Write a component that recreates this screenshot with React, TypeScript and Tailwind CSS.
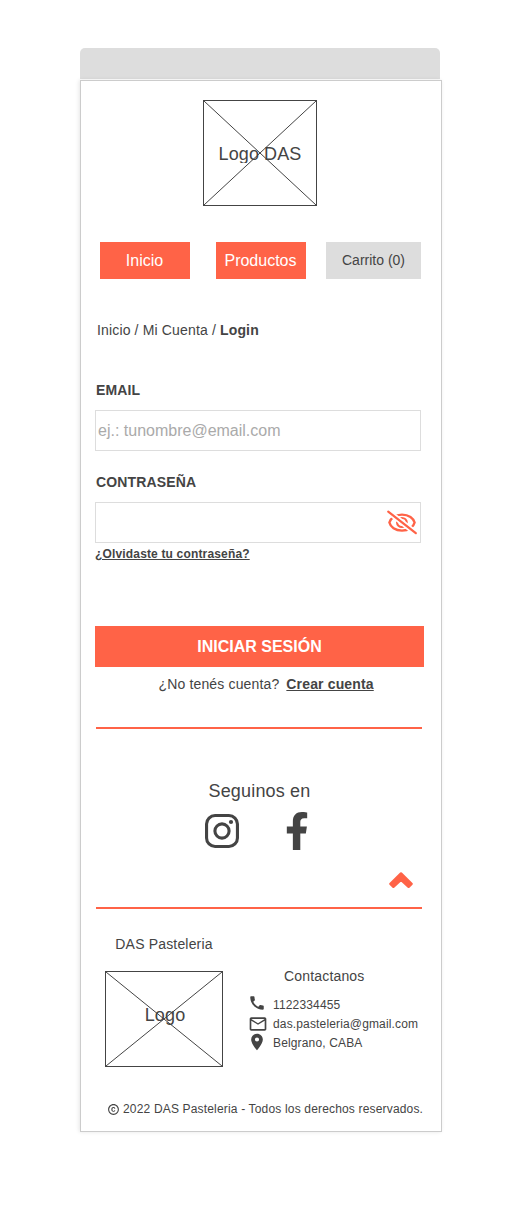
import type { ReactNode } from "react";
import { FaFacebookF } from "react-icons/fa";
import { MdCall, MdCopyright, MdLocationOn, MdMailOutline } from "react-icons/md";

function Placeholder({ className, label }: { className: string; label: ReactNode }) {
  return (
    <div className={`relative flex items-center justify-center border border-[#444] ${className}`}>
      {label}
      <svg className="absolute inset-0 h-full w-full" viewBox="0 0 100 100" preserveAspectRatio="none">
        <path d="M0 0L100 100M100 0L0 100" stroke="#444" strokeWidth="1" vectorEffect="non-scaling-stroke" fill="none" />
      </svg>
    </div>
  );
}

function EyeOff() {
  return (
    <svg width="32" height="26" viewBox="0 0 32 26" fill="none" stroke="#ff6347" strokeWidth="2.4">
      <path d="M3.4 12.6C4.4 8.2 9.2 4.6 16 4.6S27.6 8.2 28.6 12.6C27.6 17 22.8 20.6 16 20.6S4.4 17 3.4 12.6Z" />
      <ellipse cx="15.9" cy="12.5" rx="4.8" ry="4.5" strokeWidth="2.2" />
      <path d="M4 3L28 21.8" stroke="#fff" strokeWidth="5.8" />
      <path d="M2.2 1.6L29.8 23.2" strokeWidth="2.2" strokeLinecap="round" />
    </svg>
  );
}

function Instagram() {
  return (
    <svg width="34" height="34" viewBox="0 0 34 34" fill="none" stroke="#444" strokeWidth="3.1">
      <rect x="1.55" y="1.55" width="30.9" height="30.9" rx="8.5" />
      <circle cx="17" cy="17" r="7.1" />
      <circle cx="26" cy="8" r="2.1" fill="#444" stroke="none" />
    </svg>
  );
}

export default function App() {
  return (
    <div className="h-[1210px] w-[520px] bg-white pt-12 pl-20 font-['Liberation_Sans',Arial,sans-serif] text-sm text-[#444]">
      <div className="h-[31px] w-[360px] rounded-t-[5px] bg-[#ddd]" />
      <main className="mt-px flex h-[1052px] w-[362px] flex-col border border-[#ccc] bg-white shadow-[-1px_0_4px_rgba(0,0,0,0.1)]">
        <Placeholder
          className="mt-[19px] ml-[122px] h-[106px] w-[114px] shrink-0"
          label={<span className="mt-0.5 h-[18px] overflow-hidden text-lg leading-[18px] tracking-[0.1px]">Logo DAS</span>}
        />
        <nav className="mt-9 ml-[19px] flex h-[37px] shrink-0">
          <button className="w-[90px] bg-[#ff6347] pr-px text-base text-white">Inicio</button>
          <button className="ml-[26px] w-[90px] bg-[#ff6347] pr-px text-base text-white">Productos</button>
          <button className="ml-5 w-[95px] bg-[#ddd] pb-0.5">Carrito (0)</button>
        </nav>
        <p className="mt-[41px] ml-4 tracking-[0.15px]">
          Inicio / Mi Cuenta / <b>Login</b>
        </p>

        <form className="mt-10 ml-3.5 flex flex-col">
          <label className="ml-px font-bold tracking-[0.15px]">EMAIL</label>
          <input
            className="mt-2.5 h-[41px] w-[326px] border border-[#ddd] px-0.5 text-base placeholder:text-[#aaa]"
            placeholder="ej.: tunombre@email.com"
          />
          <label className="mt-[21px] ml-px font-bold tracking-[0.15px]">CONTRASEÑA</label>
          <div className="mt-2.5 flex h-[41px] w-[326px] items-center justify-end border border-[#ddd] pr-[2px]">
            <input type="password" className="h-full min-w-0 flex-1" />
            <EyeOff />
          </div>
          <a className="mt-[3px] text-xs font-bold tracking-[0.16px] underline">¿Olvidaste tu contraseña?</a>
          <button type="button" className="mt-16 h-[41px] w-[329px] bg-[#ff6347] text-base font-bold text-white">
            INICIAR SESIÓN
          </button>
        </form>
        <p className="mt-[7px] ml-[77.5px] flex gap-[7px] tracking-[0.15px]">
          <span>¿No tenés cuenta?</span>
          <b className="underline">Crear cuenta</b>
        </p>
        <hr className="mt-[33px] ml-[15px] h-0.5 w-[326px] shrink-0 border-0 bg-[#ff6347]" />

        <h2 className="mt-[52px] w-[357px] text-center text-lg leading-5 tracking-[0.17px]">Seguinos en</h2>
        <div className="mt-[11px] ml-[124px] flex h-[38px] items-center gap-[46px]">
          <Instagram />
          <FaFacebookF className="h-[38px] w-[24px]" />
        </div>
        <svg className="mt-[21px] ml-[308px] h-[18px] w-6 shrink-0" viewBox="0 0 24 18" fill="#ff6347" stroke="#ff6347">
          <path
            d="M12 2.4L22.6 12.8L19.6 15.8L12 8.8L4.4 15.8L1.4 12.8Z"
            strokeWidth="2.4"
            strokeLinejoin="round"
          />
        </svg>
        <hr className="mt-[18px] ml-[15px] h-0.5 w-[326px] shrink-0 border-0 bg-[#ff6347]" />

        <footer>
          <div className="flex">
            <section className="mt-[25px] ml-6 w-[118px]">
              <h3 className="text-center tracking-[0.17px]">DAS Pasteleria</h3>
              <Placeholder
                className="mt-[17px] h-24 w-[118px]"
                label={<span className="mb-2 ml-0.5 text-lg leading-5 tracking-[0.17px]">Logo</span>}
              />
            </section>
            <section className="mt-[57px] ml-[25px] w-[175px]">
              <h3 className="ml-9 tracking-[0.17px]">Contactanos</h3>
              <ul className="mt-2.5 text-xs leading-[19px] tracking-[0.15px]">
                <li className="flex h-[19px]">
                  <MdCall className="-mt-0.5 h-[18px] w-[18px]" />
                  <span className="ml-[7px]">1122334455</span>
                </li>
                <li className="flex h-[19px]">
                  <MdMailOutline className="-mt-px h-5 w-5" />
                  <span className="ml-[5px]">das.pasteleria@gmail.com</span>
                </li>
                <li className="flex h-[19px]">
                  <MdLocationOn className="-mt-0.5 -ml-px h-5 w-5" />
                  <span className="ml-1.5">Belgrano, CABA</span>
                </li>
              </ul>
            </section>
          </div>
          <p className="mt-[34px] ml-[26px] flex items-center gap-[3px] text-xs leading-4 tracking-[0.17px] whitespace-nowrap">
            <MdCopyright className="h-[13px] w-[13px]" />
            2022 DAS Pasteleria - Todos los derechos reservados.
          </p>
        </footer>
      </main>
    </div>
  );
}
